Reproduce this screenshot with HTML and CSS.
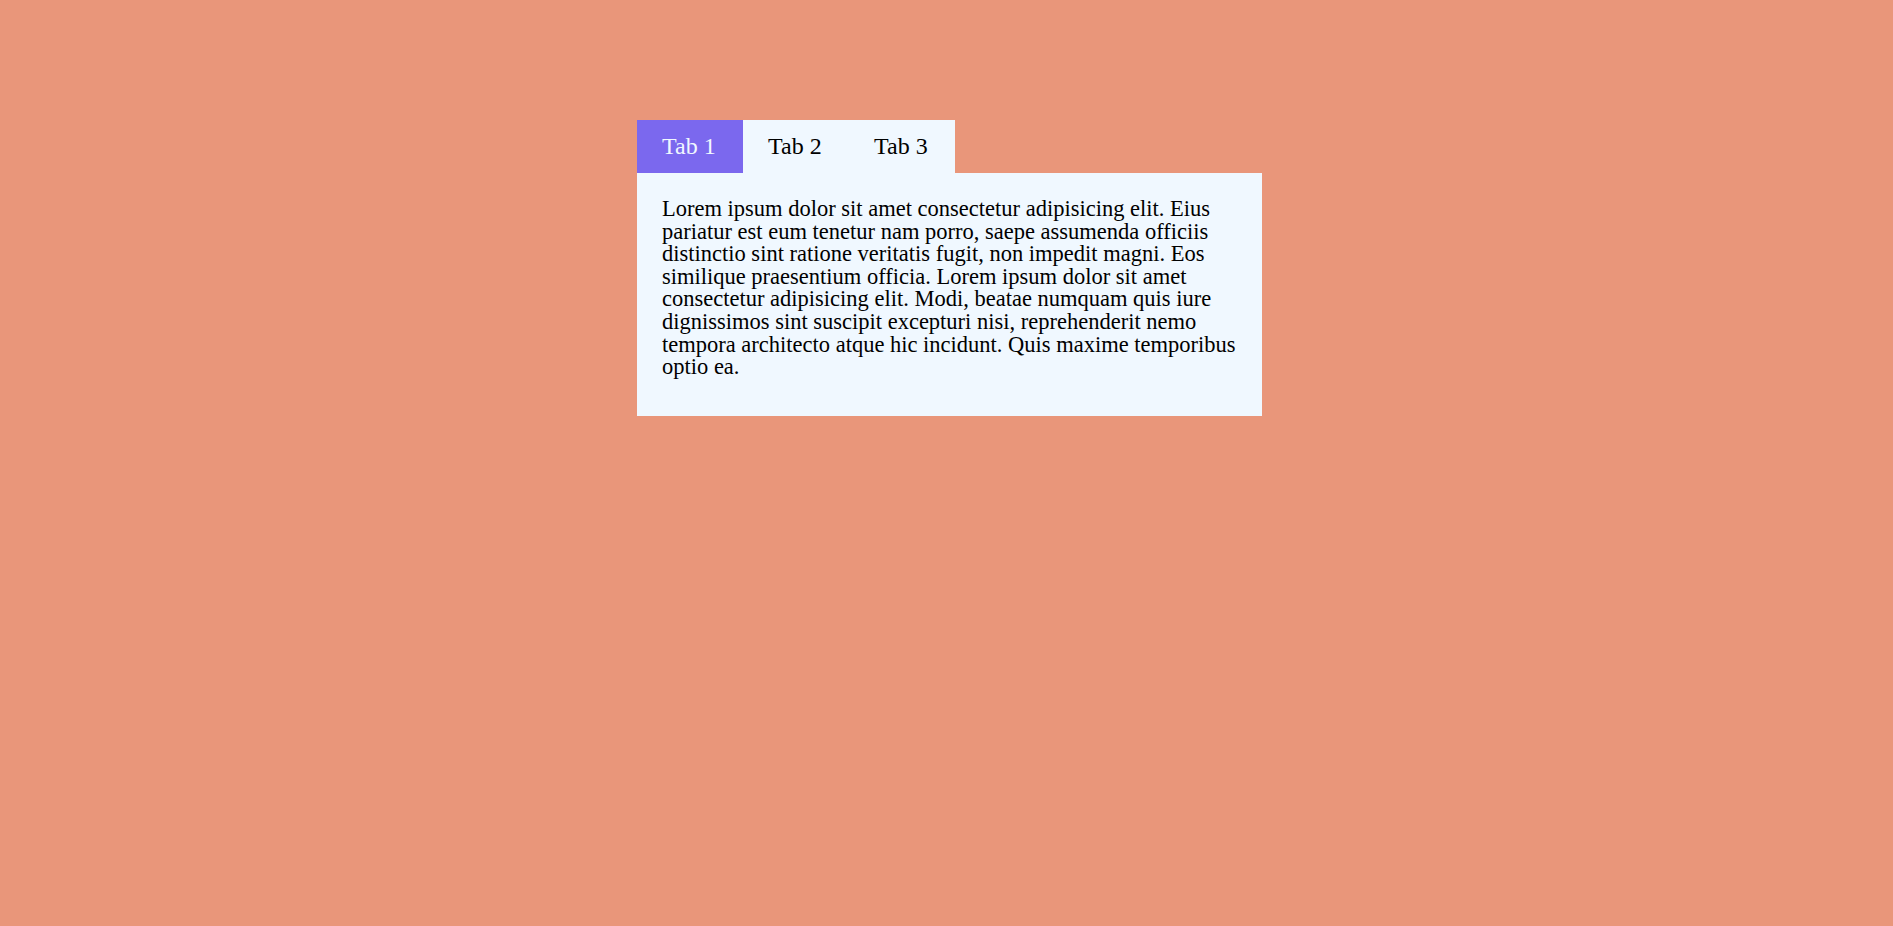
FILE: index.html
```html
<!DOCTYPE html>
<html>
<head>
<meta charset="utf-8">
<link rel="stylesheet" href="styles.css">
</head>
<body>
<div class="tabs">
  <div class="tab-bar">
    <button class="tab active">Tab 1</button>
    <button class="tab">Tab 2</button>
    <button class="tab">Tab 3</button>
  </div>
  <div class="panel">
    <p>Lorem ipsum dolor sit amet consectetur adipisicing elit. Eius pariatur est eum tenetur nam porro, saepe assumenda officiis distinctio sint ratione veritatis fugit, non impedit magni. Eos similique praesentium officia. Lorem ipsum dolor sit amet consectetur adipisicing elit. Modi, beatae numquam quis iure dignissimos sint suscipit excepturi nisi, reprehenderit nemo tempora architecto atque hic incidunt. Quis maxime temporibus optio ea.</p>
  </div>
</div>
</body>
</html>
```
FILE: styles.css
```css
html, body {
  margin: 0;
  padding: 0;
  background: #e9967a;
  font-family: "Liberation Serif", "Times New Roman", serif;
}
.tabs {
  margin: 120px 0 0 637px;
  width: 625px;
}
.tab-bar {
  display: flex;
}
.tab {
  font-family: inherit;
  font-size: 24px;
  line-height: 28px;
  padding: 12px 25px 13px;
  width: 106px;
  border: 0;
  margin: 0;
  background: #f0f8ff;
  color: #000;
  text-align: left;
}
.tab.active {
  background: #7b68ee;
  color: #f0f8ff;
}
.panel {
  background: #f0f8ff;
  padding: 25px 25px 37px 25px;
}
.panel p {
  margin: 0;
  font-size: 22.5px;
  line-height: 22.6px;
  color: #000;
}
```
